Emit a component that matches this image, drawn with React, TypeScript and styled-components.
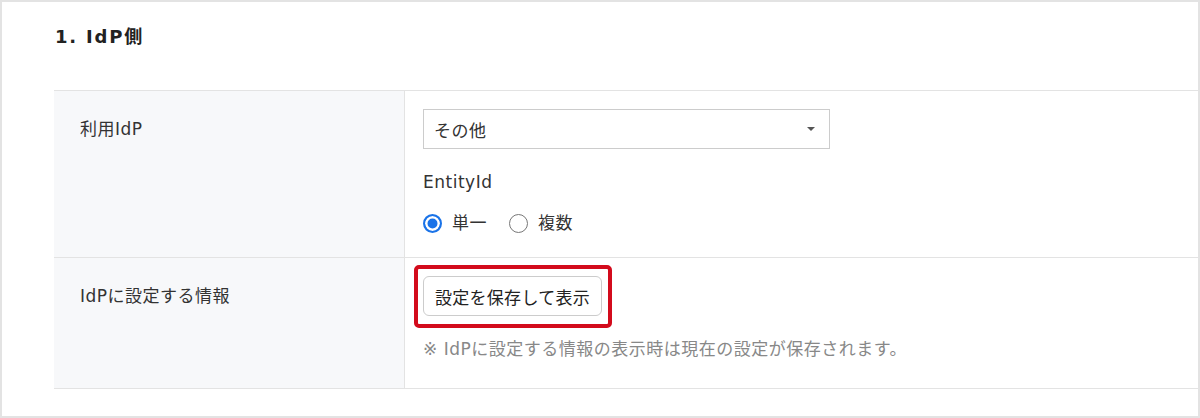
import React from "react";
import styled, { createGlobalStyle } from "styled-components";

const GlobalStyle = createGlobalStyle`
  html, body {
    margin: 0;
    padding: 0;
    background: #ffffff;
  }
  body {
    font-family: "DejaVu Sans", "Noto Sans CJK JP", sans-serif;
    color: #333333;
  }
`;

const Frame = styled.div`
  box-sizing: border-box;
  width: 1200px;
  height: 418px;
  border: 2px solid #e3e3e3;
  padding: 0 0 0 52px;
  display: flex;
  flex-direction: column;
`;

const Heading = styled.h2`
  margin: 0;
  padding: 22px 0 0 1px;
  height: 88px;
  flex-shrink: 0;
  box-sizing: border-box;
  font-size: 18px;
  line-height: 26px;
  font-weight: 700;
  letter-spacing: 1.8px;
  color: #222222;
`;

const Table = styled.div`
  display: grid;
  grid-template-columns: 351px 1fr;
  border-top: 1px solid #e3e3e3;
`;

const LabelCell = styled.div`
  background: #f7f8fa;
  border-right: 1px solid #e3e3e3;
  border-bottom: 1px solid #e3e3e3;
  padding: 26px 26px;
  font-size: 17px;
  line-height: 24px;
  letter-spacing: 0.5px;
`;

const ValueCell = styled.div<{ $bottom: number }>`
  border-bottom: 1px solid #e3e3e3;
  padding: 18px 18px ${(p) => p.$bottom}px 18px;
  display: flex;
  flex-direction: column;
  align-items: flex-start;
  font-size: 17px;
  letter-spacing: 0.5px;
`;

const Select = styled.div`
  box-sizing: border-box;
  width: 407px;
  height: 40px;
  border: 1px solid #cccccc;
  display: flex;
  align-items: center;
  justify-content: space-between;
  padding: 0 14px 0 10px;
  color: #333333;
`;

const Caret = styled.span`
  width: 0;
  height: 0;
  border-left: 4px solid transparent;
  border-right: 4px solid transparent;
  border-top: 4px solid #555555;
`;

const FieldLabel = styled.div`
  margin-top: 21px;
  line-height: 24px;
`;

const RadioRow = styled.div`
  margin-top: 16px;
  display: flex;
  align-items: center;
  height: 26px;
`;

const RadioItem = styled.label`
  display: flex;
  align-items: center;
  gap: 10px;
  margin-right: 22px;
  line-height: 24px;
`;

const RadioDot = styled.span<{ $checked?: boolean }>`
  box-sizing: border-box;
  width: 19px;
  height: 19px;
  border-radius: 50%;
  border: ${(p) => (p.$checked ? "2px solid #1a73e8" : "1px solid #777777")};
  background: ${(p) => (p.$checked ? "#1a73e8" : "#ffffff")};
  box-shadow: ${(p) => (p.$checked ? "inset 0 0 0 2.5px #ffffff" : "none")};
`;

const Highlight = styled.div`
  position: relative;
`;

const HighlightBox = styled.span`
  position: absolute;
  top: -11px;
  left: -9px;
  right: -10px;
  bottom: -12px;
  border: 4px solid #d30b1c;
  border-radius: 5px;
  pointer-events: none;
`;

const Button = styled.button`
  box-sizing: border-box;
  height: 40px;
  width: 179px;
  border: 1px solid #cccccc;
  border-radius: 6px;
  background: #ffffff;
  font-family: "DejaVu Sans", "Noto Sans CJK JP", sans-serif;
  font-size: 17px;
  letter-spacing: 0.3px;
  color: #222222;
  padding: 0;
`;

const Note = styled.div`
  margin-top: 21px;
  line-height: 24px;
  color: #888888;
`;

export default function App() {
  return (
    <>
      <GlobalStyle />
      <Frame>
        <Heading>1. IdP側</Heading>
        <Table>
          <LabelCell>利用IdP</LabelCell>
          <ValueCell $bottom={21}>
            <Select>
              <span>その他</span>
              <Caret />
            </Select>
            <FieldLabel>EntityId</FieldLabel>
            <RadioRow>
              <RadioItem>
                <RadioDot $checked />
                単一
              </RadioItem>
              <RadioItem>
                <RadioDot />
                複数
              </RadioItem>
            </RadioRow>
          </ValueCell>
          <LabelCell>IdPに設定する情報</LabelCell>
          <ValueCell $bottom={27}>
            <Highlight>
              <Button>設定を保存して表示</Button>
              <HighlightBox />
            </Highlight>
            <Note>※ IdPに設定する情報の表示時は現在の設定が保存されます。</Note>
          </ValueCell>
        </Table>
      </Frame>
    </>
  );
}
